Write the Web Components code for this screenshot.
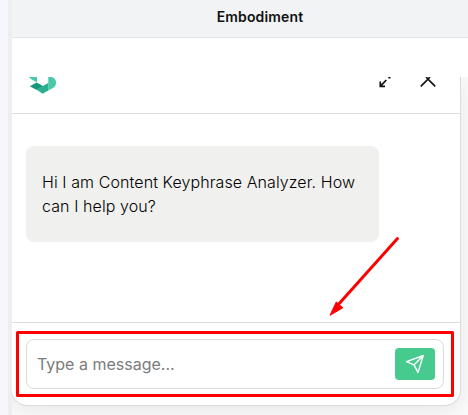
<!DOCTYPE html>
<html lang="en">
<head>
<meta charset="utf-8">
<title>Content Keyphrase Analyzer</title>
<style>
html,body{margin:0;width:468px;height:415px;overflow:hidden;background:#f6f7fc;font-family:Inter,"Liberation Sans",sans-serif}
</style>
</head>
<body>
<app-shell></app-shell>
<script>
const define = (name, markup) => customElements.define(name, class extends HTMLElement {
  constructor() {
    super();
    this.attachShadow({ mode: 'open' }).innerHTML = markup;
  }
});

define('brand-mark', `
<style>:host{display:block;width:28px;height:18px}svg{display:block}</style>
<svg width="28" height="18" viewBox="0 0 28 18">
  <path d="M.5 0H8V5.300Q3 3.500 .5 .8Z" fill="#49c9aa"/>
  <path d="M19.300 0H22.500Q27 1 27 5.500Q27 9.500 24 11L19.300 13.500Z" fill="#49c9aa"/>
  <path d="M7.300 12.500L19.300 6V13.500L13.700 16.800Z" fill="#2bb092"/>
  <path d="M.8 9.200L7.500 5.500L14 8.900L7.300 12.700Z" fill="#15977b"/>
</svg>`);

define('page-title', `
<style>:host{display:flex;justify-content:center;box-sizing:border-box;height:38px;padding:8px 0 0 40px;background:#f2f3f5;border-bottom:1px solid #e3e4e6;font-weight:600;font-size:14px;line-height:18px;letter-spacing:.16px;color:#111}</style>
<slot></slot>`);

define('chat-header', `
<style>
:host{display:flex;align-items:flex-start;box-sizing:border-box;height:37px;padding-left:17px;border-bottom:1px solid #dcdcdc}
.tools{display:flex;gap:27px;margin-left:auto;padding-right:24px}
svg{display:block}
</style>
<brand-mark></brand-mark>
<div class="tools">
  <svg width="15" height="14" viewBox="0 0 15 14" fill="none" stroke="#111" stroke-width="1.700"><path d="M10.300 .6H12.500M8.300 3L2.700 8.800M2.300 4.500V9.300H7"/></svg>
  <svg width="16" height="14" viewBox="0 0 16 14" fill="none" stroke="#111" stroke-width="1.600"><path d="M.8 9.400L8 2.100L15.200 9.400M6 0L8 2L10 0"/></svg>
</div>`);

define('chat-bubble', `
<style>:host{display:block;box-sizing:border-box;width:353px;height:96px;padding:24px 16px;border-radius:8px;background:#f0f0ee;font-size:16px;line-height:24px;font-weight:300;letter-spacing:.09px;color:#000;white-space:nowrap}</style>
<slot></slot>`);

define('send-button', `
<style>:host{display:grid;place-items:center;width:40px;height:32px;border-radius:4px;background:#47ca8e}svg{display:block}</style>
<svg width="20" height="20" viewBox="0 0 20 20" fill="none" stroke="#fff" stroke-width="1.400" stroke-linejoin="round"><path d="M1.500 7.600L18.300 1.500L13 18.400L9 10.900ZM9 10.900L18.300 1.500"/></svg>`);

define('message-field', `
<style>:host{display:flex;align-items:center;justify-content:space-between;box-sizing:border-box;height:50px;padding:0 8px 0 10px;border:1px solid #dcdcdc;border-radius:8px;font-size:16px;color:#7b7b7b}</style>
<slot></slot><send-button></send-button>`);

define('chat-panel', `
<style>
:host{display:flex;flex-direction:column;box-sizing:border-box;width:450px;height:329px;margin-left:-1px;background:#fff;border:solid #dcdcdc;border-width:0 1px 1px;border-radius:0 0 16px 16px;box-shadow:0 4px 20px #00000014}
main{flex:1;padding:32px 14px 0}
footer{box-sizing:border-box;height:83px;padding:16px 16px 0 14px;border-top:1px solid #dcdcdc}
</style>
<chat-header></chat-header>
<main><chat-bubble><slot name="message"></slot></chat-bubble></main>
<footer><message-field><slot name="placeholder"></slot></message-field></footer>`);

define('mark-up', `
<style>:host{position:absolute;inset:0}svg{display:block}</style>
<svg width="468" height="415" viewBox="0 0 468 415">
  <rect x="17.500" y="332.500" width="435" height="63" fill="none" stroke="#f00" stroke-width="3" stroke-linejoin="round"/>
  <path d="M397.500 238.500L337 306" stroke="#f00" stroke-width="3" stroke-linecap="round"/>
  <path d="M330 315.300L336.300 302L342.800 307.800Z" fill="#f00" stroke="#f00" stroke-width="1" stroke-linejoin="round"/>
</svg>`);

define('app-shell', `
<style>
:host{display:flex;position:relative;box-sizing:border-box;width:468px;height:415px;padding-left:8px;overflow:hidden}
.page{flex:1;border-left:4px solid #eee;min-width:0;overflow:hidden}
.gap{height:39px;background:#fff}
.stage{height:338px;background:#fafafa;overflow:hidden}
</style>
<div class="page">
  <page-title>Embodiment</page-title>
  <div class="gap"></div>
  <div class="stage"><chat-panel>
    <span slot="message">Hi I am Content Keyphrase Analyzer. How<br>can I help you?</span>
    <span slot="placeholder">Type a message...</span>
  </chat-panel></div>
</div>
<mark-up></mark-up>`);
</script>
</body>
</html>
